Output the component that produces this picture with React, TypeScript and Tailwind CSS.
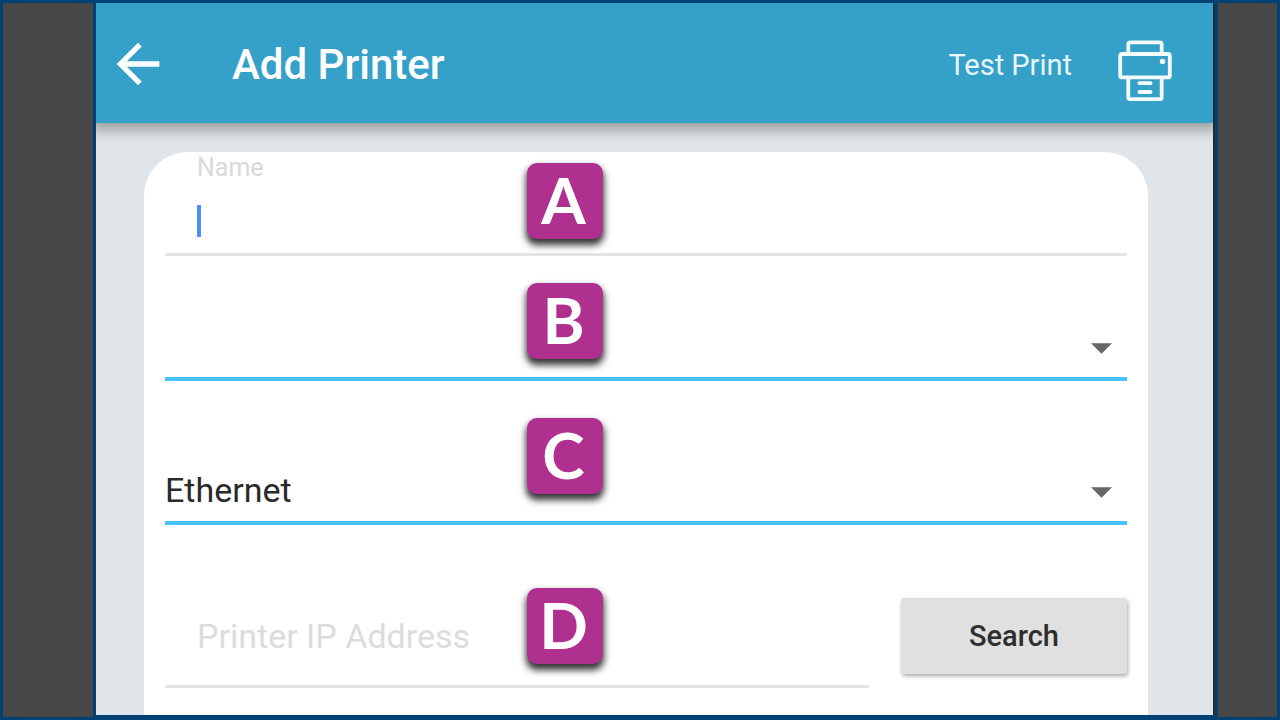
import type { ReactNode } from 'react';

function Badge({ children, className }: { children: ReactNode; className: string }) {
  return (
    <span
      aria-hidden="true"
      className={`pointer-events-none absolute left-[362px] flex size-[76px] items-center justify-center rounded-[10px] bg-[#b03090] pr-[3px] pb-0.5 font-['Lato',sans-serif] text-[64px] leading-none font-bold text-white shadow-[0_5px_7px_1px_rgba(0,0,0,0.8)] ${className}`}
    >
      {children}
    </span>
  );
}

function Dropdown({ label, options }: { label: string; options: string[] }) {
  return (
    <div className="relative">
      <select
        aria-label={label}
        className="block h-[62px] w-full appearance-none border-b-4 border-[#48c4fc] bg-transparent pb-[3px] text-[34px] text-[#2a2a2a] outline-none"
      >
        {options.map((option) => (
          <option key={option}>{option}</option>
        ))}
      </select>
      <svg
        aria-hidden="true"
        viewBox="0 0 22 11"
        className="pointer-events-none absolute top-6 right-[15px] h-[11px] w-[21px] fill-[#666666]"
      >
        <path d="M0 0H22L11 11Z" />
      </svg>
    </div>
  );
}

function PrinterIcon() {
  return (
    <svg aria-hidden="true" viewBox="0 0 54 62" className="h-[62px] w-[54px]" fill="none" stroke="#f4fbfd" strokeWidth="3.8" strokeLinejoin="round" strokeLinecap="round">
      <path d="M10.3 13V4.5Q10.3 2.4 12.4 2.4H41.6Q43.7 2.4 43.7 4.5V13" />
      <rect x="2.2" y="14" width="49.6" height="23.4" rx="2" />
      <path d="M10.3 38V57.2Q10.3 59.2 12.4 59.2H41.6Q43.7 59.2 43.7 57.2V38" />
      <path d="M21.4 43.2H32.6M21.4 52H32.6" />
      <circle cx="44.5" cy="21.4" r="2.7" fill="#f4fbfd" stroke="none" />
    </svg>
  );
}

export default function App() {
  return (
    <div className="flex min-h-screen gap-[3px] bg-[#004274] p-[3px] font-['Roboto',sans-serif]">
      <div className="w-[90px] shrink-0 bg-[#484848]" />
      <div className="mb-0.5 flex min-w-0 flex-1 flex-col border-r-2 border-[#222a30] bg-[#dfe5e8]">
        <header className="z-10 flex h-[120px] items-center bg-[#35a1c8] pt-1 pr-[41px] pl-[10px] text-white shadow-[0_0_14px_6px_rgba(0,0,0,0.35)] [clip-path:inset(0_0_-20px_0)]">
          <button type="button" aria-label="Back" className="pb-0.5">
            <svg aria-hidden="true" viewBox="0 0 24 24" className="size-16 fill-white">
              <path d="M20 11H7.83l5.59-5.59L12 4l-8 8 8 8 1.41-1.41L7.83 13H20v-2z" />
            </svg>
          </button>
          <h1 className="ml-[62px] text-[42px] leading-none font-medium">Add Printer</h1>
          <button type="button" className="ml-auto flex items-center gap-[46px] text-[29px] leading-none text-[#e8f6fb]">
            <span>Test Print</span>
            <span className="pt-3">
              <PrinterIcon />
            </span>
          </button>
        </header>
        <form className="mt-[29px] mr-[65px] ml-12 flex-1 rounded-t-[44px] bg-white pr-[21px] pl-[21px]">
          <div className="relative">
            <label htmlFor="name" className="block pl-8 text-[25px] leading-8 text-[#d9d9d9]">
              Name
            </label>
            <div className="flex h-[72px] items-center border-b-3 border-[#e4e4e4] pt-1 pl-8">
              <span aria-hidden="true" className="h-8 w-1 bg-[#4f8df8]" />
              <input id="name" type="text" className="min-w-0 flex-1 text-[34px] text-[#2a2a2a] outline-none" />
            </div>
            <Badge className="top-[11px]">A</Badge>
          </div>
          <div className="relative pt-[63px]">
            <Dropdown label="Printer model" options={['']} />
            <Badge className="top-[27px]">B</Badge>
          </div>
          <div className="relative pt-[82px]">
            <Dropdown label="Connection type" options={['Ethernet']} />
            <Badge className="top-[37px]">C</Badge>
          </div>
          <div className="relative flex gap-8 pt-16">
            <input
              type="text"
              aria-label="Printer IP Address"
              placeholder="Printer IP Address"
              className="h-[99px] min-w-0 flex-1 border-b-3 border-[#e4e4e4] pb-0.5 pl-8 text-[34px] text-[#2a2a2a] outline-none placeholder:text-[#dcdcdc]"
            />
            <button
              type="button"
              className="mt-[9px] h-[76px] w-[226px] rounded-[4px] bg-[#e0e0e0] pt-0.5 text-[29px] font-medium text-[#2e2e2e] shadow-[1px_2px_4px_rgba(0,0,0,0.35)]"
            >
              Search
            </button>
            <Badge className="top-[63px]">D</Badge>
          </div>
        </form>
      </div>
      <div className="w-[59px] shrink-0 bg-[#484848]" />
    </div>
  );
}
